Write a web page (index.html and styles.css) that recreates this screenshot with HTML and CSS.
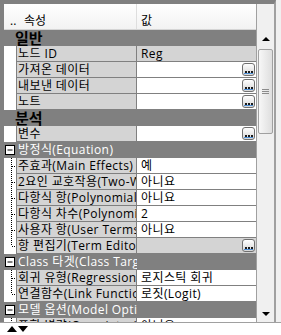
FILE: index.html
```html
<!DOCTYPE html>
<html lang="ko">
<head>
    <meta charset="UTF-8">
    <title>속성</title>
    <link rel="stylesheet" href="styles.css">
</head>
<body>
  <div class="window">
    <div class="frame">
      <div class="grid">
        <div class="head">
          <div class="head-gutter">..</div>
          <div class="head-name">속성</div>
          <div class="head-value">값</div>
        </div>

        <div class="row cat"><div class="cat-label">일반</div></div>
        <div class="row">
          <div class="gutter"></div>
          <div class="name">노드 ID</div>
          <div class="value ro">Reg</div>
        </div>
        <div class="row">
          <div class="gutter"></div>
          <div class="name">가져온 데이터</div>
          <div class="value"><span class="more"><svg width="11" height="11"><rect x="2" y="7" width="2" height="2" fill="#1b1b1b"/><rect x="5" y="7" width="2" height="2" fill="#1b1b1b"/><rect x="8" y="7" width="2" height="2" fill="#1b1b1b"/><rect x="1" y="9" width="9" height="1" fill="#4d8fd6"/></svg></span></div>
        </div>
        <div class="row">
          <div class="gutter"></div>
          <div class="name">내보낸 데이터</div>
          <div class="value"><span class="more"><svg width="11" height="11"><rect x="2" y="7" width="2" height="2" fill="#1b1b1b"/><rect x="5" y="7" width="2" height="2" fill="#1b1b1b"/><rect x="8" y="7" width="2" height="2" fill="#1b1b1b"/><rect x="1" y="9" width="9" height="1" fill="#4d8fd6"/></svg></span></div>
        </div>
        <div class="row">
          <div class="gutter"></div>
          <div class="name">노트</div>
          <div class="value"><span class="more"><svg width="11" height="11"><rect x="2" y="7" width="2" height="2" fill="#1b1b1b"/><rect x="5" y="7" width="2" height="2" fill="#1b1b1b"/><rect x="8" y="7" width="2" height="2" fill="#1b1b1b"/><rect x="1" y="9" width="9" height="1" fill="#4d8fd6"/></svg></span></div>
        </div>

        <div class="row cat"><div class="cat-label">분석</div></div>
        <div class="row">
          <div class="gutter"></div>
          <div class="name">변수</div>
          <div class="value"><span class="more"><svg width="11" height="11"><rect x="2" y="7" width="2" height="2" fill="#1b1b1b"/><rect x="5" y="7" width="2" height="2" fill="#1b1b1b"/><rect x="8" y="7" width="2" height="2" fill="#1b1b1b"/><rect x="1" y="9" width="9" height="1" fill="#4d8fd6"/></svg></span></div>
        </div>

        <div class="row group">
          <div class="gutter"><svg width="12" height="16"><rect x="1.5" y="3.5" width="9" height="9" fill="#fff" stroke="#000"/><path d="M3.5 8H8.5" stroke="#000"/></svg></div>
          <div class="group-name">방정식(Equation)</div>
        </div>
        <div class="row">
          <div class="gutter"><svg width="12" height="16"><path d="M7.5 0V16M8 8.5H12" stroke="#000" stroke-dasharray="1 1"/></svg></div>
          <div class="name">주효과(Main Effects)</div>
          <div class="value">예</div>
        </div>
        <div class="row">
          <div class="gutter"><svg width="12" height="16"><path d="M7.5 0V16M8 8.5H12" stroke="#000" stroke-dasharray="1 1"/></svg></div>
          <div class="name">2요인 교호작용(Two-Way Interactions)</div>
          <div class="value">아니요</div>
        </div>
        <div class="row">
          <div class="gutter"><svg width="12" height="16"><path d="M7.5 0V16M8 8.5H12" stroke="#000" stroke-dasharray="1 1"/></svg></div>
          <div class="name">다항식 항(Polynomial Terms)</div>
          <div class="value">아니요</div>
        </div>
        <div class="row">
          <div class="gutter"><svg width="12" height="16"><path d="M7.5 0V16M8 8.5H12" stroke="#000" stroke-dasharray="1 1"/></svg></div>
          <div class="name">다항식 차수(Polynomial Degree)</div>
          <div class="value">2</div>
        </div>
        <div class="row">
          <div class="gutter"><svg width="12" height="16"><path d="M7.5 0V16M8 8.5H12" stroke="#000" stroke-dasharray="1 1"/></svg></div>
          <div class="name">사용자 항(User Terms)</div>
          <div class="value">아니요</div>
        </div>
        <div class="row">
          <div class="gutter"><svg width="12" height="16"><path d="M7.5 0V8M8 8.5H12" stroke="#000" stroke-dasharray="1 1"/></svg></div>
          <div class="name">항 편집기(Term Editor)</div>
          <div class="value ro"><span class="more"><svg width="11" height="11"><rect x="2" y="7" width="2" height="2" fill="#1b1b1b"/><rect x="5" y="7" width="2" height="2" fill="#1b1b1b"/><rect x="8" y="7" width="2" height="2" fill="#1b1b1b"/><rect x="1" y="9" width="9" height="1" fill="#4d8fd6"/></svg></span></div>
        </div>

        <div class="row group">
          <div class="gutter"><svg width="12" height="16"><rect x="1.5" y="3.5" width="9" height="9" fill="#fff" stroke="#000"/><path d="M3.5 8H8.5" stroke="#000"/></svg></div>
          <div class="group-name">Class 타겟(Class Target)</div>
        </div>
        <div class="row">
          <div class="gutter"><svg width="12" height="16"><path d="M7.5 0V16M8 8.5H12" stroke="#000" stroke-dasharray="1 1"/></svg></div>
          <div class="name">회귀 유형(Regression Type)</div>
          <div class="value">로지스틱 회귀</div>
        </div>
        <div class="row">
          <div class="gutter"><svg width="12" height="16"><path d="M7.5 0V8M8 8.5H12" stroke="#000" stroke-dasharray="1 1"/></svg></div>
          <div class="name">연결함수(Link Function)</div>
          <div class="value">로짓(Logit)</div>
        </div>

        <div class="row group">
          <div class="gutter"><svg width="12" height="16"><rect x="1.5" y="3.5" width="9" height="9" fill="#fff" stroke="#000"/><path d="M3.5 8H8.5" stroke="#000"/></svg></div>
          <div class="group-name">모델 옵션(Model Options)</div>
        </div>
        <div class="row">
          <div class="gutter"><svg width="12" height="16"><path d="M7.5 0V16M8 8.5H12" stroke="#000" stroke-dasharray="1 1"/></svg></div>
          <div class="name">포함 변량(Covariates)</div>
          <div class="value">아니요</div>
        </div>
      </div>

      <div class="scroll">
        <div class="sb-top"></div>
        <div class="sb-btn"><span class="arrow-up"></span></div>
        <div class="thumb"><span class="grip"></span></div>
        <div class="track"></div>
        <div class="sb-btn down"><span class="arrow-down"></span></div>
      </div>
    </div>

    <div class="footer">
      <span class="tri-up"></span>
      <span class="tri-down"></span>
    </div>
  </div>
</body>
</html>
```

FILE: styles.css
```css
* {
  box-sizing: border-box;
}

body {
  margin: 0;
  width: 281px;
  height: 335px;
  overflow: hidden;
  background-color: #f0f0f0;
  font-family: "Open Sans", "Noto Sans CJK KR", sans-serif;
  font-size: 12px;
  color: #000;
}

.window {
  display: flex;
  flex-direction: column;
  height: 335px;
}

.frame {
  display: flex;
  width: 276px;
  height: 322px;
  flex: none;
  border-top: 4px solid #808080;
  border-left: 4px solid #808080;
  border-right: 2px solid #a0a0a0;
}

.grid {
  width: 252px;
  display: flex;
  flex-direction: column;
  overflow: hidden;
  background-color: #fff;
}

/* header */
.head {
  display: flex;
  height: 26px;
  flex: none;
  border-bottom: 1px solid #d5d5d5;
  background: linear-gradient(#ffffff, #f2f2f2);
  line-height: 15px;
}

.head-gutter {
  width: 18px;
  padding: 9px 0 0 6px;
}

.head-name {
  width: 115px;
  padding: 9px 0 0 2px;
  border-right: 1px solid #dedede;
}

.head-value {
  flex: 1;
  padding: 9px 0 0 4px;
}

/* rows */
.row {
  display: flex;
  height: 16px;
  flex: none;
  line-height: 15px;
  white-space: nowrap;
  letter-spacing: 0.4px;
}

.gutter {
  width: 12px;
  flex: none;
  display: flex;
}

.name {
  width: 121px;
  flex: none;
  padding-left: 1px;
  overflow: hidden;
  background-color: #d4d4d4;
  border-left: 1px solid #808080;
  border-right: 1px solid #808080;
  border-bottom: 1px solid #808080;
}

.value {
  flex: 1;
  display: flex;
  align-items: center;
  padding-left: 4px;
  overflow: hidden;
  background-color: #fff;
  border-bottom: 1px solid #808080;
}

.value.ro {
  background-color: #d4d4d4;
}

.more {
  width: 13px;
  height: 13px;
  margin-left: auto;
  margin-right: 1px;
  border: 1px solid #707070;
  border-radius: 3px;
  background: linear-gradient(#ffffff, #d6d6d6);
  display: flex;
}

.cat {
  background-color: #808080;
}

.cat-label {
  padding-left: 11px;
  font-size: 15px;
  font-weight: bold;
  line-height: 16px;
  letter-spacing: 0;
}

.group {
  background-color: #808080;
}

.group-name {
  width: 121px;
  flex: none;
  padding-left: 2px;
  overflow: hidden;
  color: #fff;
  line-height: 16px;
}

/* scrollbar */
.scroll {
  width: 18px;
  display: flex;
  flex-direction: column;
  background-color: #f0f0f0;
  border-left: 1px solid #a0a0a0;
}

.sb-top {
  height: 26px;
  flex: none;
}

.sb-btn {
  height: 18px;
  flex: none;
  display: flex;
  align-items: center;
  justify-content: center;
}

.sb-btn.down {
  height: 17px;
}

.arrow-up {
  border-left: 4px solid transparent;
  border-right: 4px solid transparent;
  border-bottom: 4px solid #000;
}

.arrow-down {
  border-left: 4px solid transparent;
  border-right: 4px solid transparent;
  border-top: 4px solid #000;
}

.thumb {
  height: 85px;
  flex: none;
  margin: 1px 1px 0;
  border: 1px solid #a0a0a0;
  border-radius: 2px;
  background: linear-gradient(to right, #f7f7f7, #dedede);
  display: flex;
  align-items: center;
  justify-content: center;
}

.grip {
  width: 7px;
  height: 5px;
  border-top: 1px solid #8c8c8c;
  border-bottom: 1px solid #8c8c8c;
  background: linear-gradient(transparent 1px, #8c8c8c 1px, #8c8c8c 2px, transparent 2px);
}

.track {
  flex: 1;
}

/* bottom bar */
.footer {
  flex: 1;
  display: flex;
  align-items: center;
  gap: 1px;
  padding-left: 7px;
  background-color: #fff;
  border-top: 1px solid #a0a0a0;
}

.tri-up {
  border-left: 5px solid transparent;
  border-right: 5px solid transparent;
  border-bottom: 6px solid #000;
}

.tri-down {
  border-left: 5px solid transparent;
  border-right: 5px solid transparent;
  border-top: 6px solid #000;
}
```
